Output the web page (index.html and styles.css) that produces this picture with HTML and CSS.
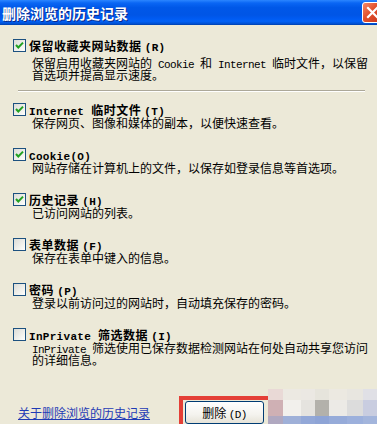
FILE: index.html
```html
<!DOCTYPE html>
<html lang="zh-CN">
<head>
<meta charset="utf-8">
<title>删除浏览的历史记录</title>
<link rel="stylesheet" href="styles.css">
</head>
<body>
<div class="window">
  <div class="titlebar">
    <span class="title">删除浏览的历史记录</span>
    <span class="close"><svg width="19" height="19" viewBox="0 0 19 19"><path d="M5 5 L14 14 M14 5 L5 14" stroke="#fff" stroke-width="2.2" stroke-linecap="square" fill="none"/></svg></span>
  </div>
  <div class="content">
    <div class="item first">
      <div class="head"><span class="cb"><svg width="11" height="11" viewBox="0 0 11 11"><path d="M2 5 L4.3 7.5 L9 2.6" stroke="#21a121" stroke-width="2" fill="none"/></svg></span><span class="label">保留收藏夹网站数据 <span class="en">(R)</span></span></div>
      <div class="desc"><div class="ln">保留启用收藏夹网站的<span class="en"> Cookie </span>和<span class="en"> Internet </span>临时文件，以保留</div><div class="ln">首选项并提高显示速度。</div></div>
    </div>
    <div class="sep"></div>
    <div class="list">
      <div class="item">
        <div class="head"><span class="cb"><svg width="11" height="11" viewBox="0 0 11 11"><path d="M2 5 L4.3 7.5 L9 2.6" stroke="#21a121" stroke-width="2" fill="none"/></svg></span><span class="label"><span class="en">Internet </span>临时文件 <span class="en">(T)</span></span></div>
        <div class="desc"><div class="ln">保存网页、图像和媒体的副本，以便快速查看。</div></div>
      </div>
      <div class="item">
        <div class="head"><span class="cb"><svg width="11" height="11" viewBox="0 0 11 11"><path d="M2 5 L4.3 7.5 L9 2.6" stroke="#21a121" stroke-width="2" fill="none"/></svg></span><span class="label"><span class="en">Cookie(O)</span></span></div>
        <div class="desc"><div class="ln">网站存储在计算机上的文件，以保存如登录信息等首选项。</div></div>
      </div>
      <div class="item">
        <div class="head"><span class="cb"><svg width="11" height="11" viewBox="0 0 11 11"><path d="M2 5 L4.3 7.5 L9 2.6" stroke="#21a121" stroke-width="2" fill="none"/></svg></span><span class="label">历史记录 <span class="en">(H)</span></span></div>
        <div class="desc"><div class="ln">已访问网站的列表。</div></div>
      </div>
      <div class="item">
        <div class="head"><span class="cb"></span><span class="label">表单数据 <span class="en">(F)</span></span></div>
        <div class="desc"><div class="ln">保存在表单中键入的信息。</div></div>
      </div>
      <div class="item">
        <div class="head"><span class="cb"></span><span class="label">密码 <span class="en">(P)</span></span></div>
        <div class="desc"><div class="ln">登录以前访问过的网站时，自动填充保存的密码。</div></div>
      </div>
      <div class="item">
        <div class="head"><span class="cb"></span><span class="label"><span class="en">InPrivate </span>筛选数据 <span class="en">(I)</span></span></div>
        <div class="desc"><div class="ln"><span class="en">InPrivate </span>筛选使用已保存数据检测网站在何处自动共享您访问</div><div class="ln">的详细信息。</div></div>
      </div>
    </div>
    <div class="footer">
      <a class="link" href="#">关于删除浏览的历史记录</a>
      <button class="btn">删除 <span class="en">(D)</span></button>
    </div>
  </div>
  <div class="highlight"></div>
  <div class="mosaic">
    <i class="a1"></i><i class="a2"></i><i class="a3"></i><i class="a4"></i><i class="a5"></i><i class="a6"></i><i class="a7"></i>
    <i class="b1"></i><i class="b2"></i><i class="b3"></i><i class="b4"></i><i class="b5"></i><i class="b6"></i><i class="b7"></i>
    <i class="c1"></i><i class="c2"></i><i class="c3"></i><i class="c4"></i><i class="c5"></i><i class="c6"></i><i class="c7"></i>
  </div>
</div>
</body>
</html>
```
FILE: styles.css
```css
* { box-sizing: border-box; }
html, body { margin: 0; padding: 0; }
body {
  width: 377px;
  height: 424px;
  overflow: hidden;
  background: #ece9d8;
  font-family: "Noto Sans CJK SC", "Noto Sans", sans-serif;
  font-size: 12px;
  color: #000;
}
.window {
  position: relative;
  width: 377px;
  height: 424px;
  overflow: hidden;
}
.titlebar {
  height: 25px;
  display: flex;
  align-items: center;
  padding-left: 2px;
  background: linear-gradient(to bottom, #2b86ff 0%, #0a66f4 12%, #0058e8 30%, #0055e6 60%, #005bf2 75%, #0262f6 85%, #0052d6 94%, #0040ab 100%);
}
.title {
  color: #fff;
  font-weight: bold;
  font-size: 14px;
  line-height: 16px;
  text-shadow: 1px 1px 0 #0a2a8a;
}
.close {
  margin-left: auto;
  margin-right: -6px;
  width: 21px;
  height: 21px;
  border: 1px solid #fff;
  border-radius: 3px;
  background: linear-gradient(135deg, #f4886a 0%, #e2502c 45%, #c8341a 100%);
  display: flex;
  align-items: center;
  justify-content: center;
}
.content {
  padding: 14px 0 0 13px;
}
.item { display: flex; flex-direction: column; }
.head {
  display: flex;
  align-items: center;
  height: 13px;
  gap: 3px;
}
.cb {
  width: 13px;
  height: 13px;
  flex: none;
  border: 1px solid #1c5180;
  background: linear-gradient(135deg, #dcdcd7 0%, #f4f4f0 70%, #ffffff 100%);
  display: flex;
  align-items: center;
  justify-content: center;
}
.label {
  font-weight: bold;
  height: 13px;
  line-height: 13px;
  letter-spacing: 0.5px;
  white-space: nowrap;
}
.en {
  font-family: "Liberation Mono", monospace;
  font-size: 11px;
  line-height: 0;
  letter-spacing: -0.6px;
  white-space: pre;
}
.label .en { letter-spacing: 0.3px; }
.desc {
  margin-top: 1px;
  padding-left: 19px;
}
.ln {
  height: 12px;
  line-height: 12px;
  white-space: nowrap;
}
.first .desc { margin-top: 5px; }
.sep {
  margin: 9px 0 0 5px;
  width: 347px;
  height: 2px;
  border-top: 1px solid #aca899;
  border-bottom: 1px solid #fff;
}
.list {
  margin-top: 11px;
  display: flex;
  flex-direction: column;
  gap: 19px;
}
.footer {
  margin-top: 35px;
  display: flex;
  align-items: center;
  height: 23px;
}
.link {
  margin-left: 5px;
  color: #1f3bb5;
  text-decoration: underline;
  height: 12px;
  line-height: 12px;
  white-space: nowrap;
}
.btn {
  margin-left: 35px;
  width: 79px;
  height: 23px;
  padding: 0;
  border: 1px solid #003c74;
  border-radius: 3px;
  background: linear-gradient(to bottom, #ffffff 0%, #f4f3ee 60%, #e6e3d8 100%);
  font-family: "Noto Sans CJK SC", sans-serif;
  font-size: 12px;
  line-height: 12px;
  color: #000;
}
.btn .en { letter-spacing: -0.6px; }
.highlight {
  position: absolute;
  left: 179px;
  top: 396px;
  width: 94px;
  height: 40px;
  border: 4px solid #e43f36;
}
.mosaic {
  position: absolute;
  left: 268px;
  top: 389px;
  width: 109px;
  height: 35px;
  display: grid;
  grid-template-columns: 15px 18px 14px 14px 18px 16px 14px;
  grid-template-rows: 11px 16px 8px;
}
.mosaic i { display: block; }
.a1 { background: #e9d9d6; } .a2 { background: #ece9e2; } .a3 { background: #ebe8e3; } .a4 { background: #e6e4dc; }
.a5 { background: #ece9e1; } .a6 { background: #e8e6e0; } .a7 { background: #e0e0e6; }
.b1 { background: #cfb0b4; } .b2 { background: #f2f0ec; } .b3 { background: #e5e3df; } .b4 { background: #b3b1ab; }
.b5 { background: #eceae6; } .b6 { background: #dcdcdc; } .b7 { background: #c9cde0; }
.c1 { background: #b0a8c0; } .c2 { background: #9fb0d8; } .c3 { background: #93a8d8; } .c4 { background: #8ea4d6; }
.c5 { background: #96abd9; } .c6 { background: #9cb0dc; } .c7 { background: #a3b5dc; }
```
